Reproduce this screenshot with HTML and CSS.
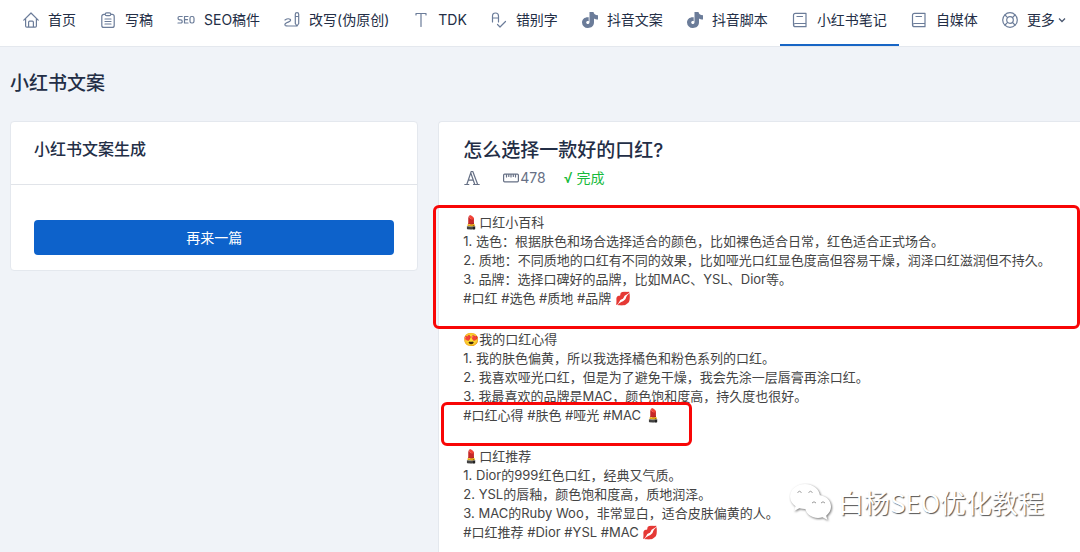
FILE: index.html
```html
<!DOCTYPE html>
<html lang="zh-CN">
<head>
<meta charset="utf-8">
<meta name="viewport" content="width=device-width, initial-scale=1">
<title>小红书文案</title>
<link rel="stylesheet" href="styles.css">
</head>
<body>
<header class="topbar">
  <nav class="nav" aria-label="主导航">
    <a class="nav-item" href="#home"><svg class="icon" viewBox="0 0 16 16"><path d="M.8 8.200 8 1l7.200 7.200M2.600 6.800V14a1.200 1.200 0 0 0 1.200 1.200h8.400a1.200 1.200 0 0 0 1.200-1.200V6.800M5.600 15V10.200a1 1 0 0 1 1-1h2.800a1 1 0 0 1 1 1V15"/></svg>首页</a>
    <a class="nav-item" href="#write"><svg class="icon" viewBox="0 0 16 16"><path d="M5.200 2.400H3.800a2 2 0 0 0-2 2v9a2 2 0 0 0 2 2h8.400a2 2 0 0 0 2-2v-9a2 2 0 0 0-2-2h-1.400M5.200 2.200q0-1.400 1.400-1.400h2.800q1.400 0 1.400 1.400t-1.400 1.500H6.600q-1.400 0-1.400-1.500zM5 7h6M5 9.500h6M5 12h6"/></svg>写稿</a>
    <a class="nav-item" href="#seo"><svg class="icon icon-wide" viewBox="0 0 18 16"><path d="M5.200 4.500H2.400Q1 4.500 1 6.100t1.400 1.700h1.400q1.400 0 1.400 1.600T3.800 11H1M11 4.500H7.500V11H11M7.500 7.700h3M14.600 4.500h.8Q17 4.500 17 6.200v3.100Q17 11 15.400 11h-.8Q13 11 13 9.300V6.200q0-1.700 1.600-1.700z"/></svg>SEO稿件</a>
    <a class="nav-item" href="#rewrite"><svg class="icon" viewBox="0 0 16 16"><path d="M11.300 2.300a1.700 1.700 0 0 1 3.400 0v9.200L13 14l-1.700-2.500zM11.300 4.500h3.400M1 8q3-2 5-.8c1.500 1-.2 2.300-1.800 2.900-2 .7-4 1.800-3 3.200.6.800 2 .7 3.300.7H13"/></svg>改写(伪原创)</a>
    <a class="nav-item" href="#tdk"><svg class="icon" viewBox="0 0 16 16"><path d="M3 3V1.500h10V3M8 1.500v13"/></svg>TDK</a>
    <a class="nav-item" href="#typo"><svg class="icon" viewBox="0 0 16 16"><path d="M1.500 10V4q0-3 3-3t3 3v6M1.500 6h6M6.500 12.500l2.500 2.500L14.500 9.500"/></svg>错别字</a>
    <a class="nav-item" href="#douyin"><svg class="icon icon-solid" viewBox="0 0 16 16"><path d="M7.500 0h4c.2 1.900 1.500 3 4.500 3.300v4.200c-1.600 0-3-.4-4-1.100v3.900C12 14 9.300 16 6 16a5.800 5.800 0 0 1-6-5.600C0 7 3 4.700 6.700 5.200v4c-1.500-.3-2.500.3-2.500 1.300 0 .9.700 1.500 1.600 1.500 1 0 1.700-.6 1.700-1.800z"/></svg>抖音文案</a>
    <a class="nav-item" href="#script"><svg class="icon icon-solid" viewBox="0 0 16 16"><path d="M7.500 0h4c.2 1.900 1.500 3 4.500 3.300v4.200c-1.600 0-3-.4-4-1.100v3.900C12 14 9.300 16 6 16a5.800 5.800 0 0 1-6-5.600C0 7 3 4.700 6.700 5.200v4c-1.500-.3-2.500.3-2.500 1.300 0 .9.700 1.500 1.600 1.500 1 0 1.700-.6 1.700-1.800z"/></svg>抖音脚本</a>
    <a class="nav-item active" href="#notes" aria-current="page"><svg class="icon" viewBox="0 0 16 16"><path d="M14 11.500V1.300H3.500q-2 0-2 2v9.400q0 2 2 2H14v-3.200H3.500q-2 0-2 1.600M5 4.500h5.500"/></svg>小红书笔记</a>
    <a class="nav-item" href="#media"><svg class="icon" viewBox="0 0 16 16"><path d="M14 11.500V1.300H3.500q-2 0-2 2v9.400q0 2 2 2H14v-3.200H3.500q-2 0-2 1.600M5 4.500h5.500"/></svg>自媒体</a>
    <a class="nav-item" href="#more"><svg class="icon" viewBox="0 0 16 16"><circle cx="8" cy="8" r="7.300"/><circle cx="8" cy="8" r="3.300"/><path d="m3 3 2.600 2.600M13 3l-2.600 2.600M3 13l2.600-2.600M13 13l-2.600-2.600"/></svg><span class="more">更多<svg class="chevron" viewBox="0 0 8 8"><path d="m1 2.500 3 3 3-3"/></svg></span></a>
  </nav>
</header>

<main class="page">
  <h1 class="page-title">小红书文案</h1>
  <div class="columns">
    <section class="card">
      <h2 class="card-title">小红书文案生成</h2>
      <div class="card-body">
        <button class="primary" type="button">再来一篇</button>
      </div>
    </section>

    <article class="card result">
      <h2 class="result-title">怎么选择一款好的口红?</h2>
      <div class="meta">
        <svg class="icon font-icon" viewBox="0 0 16 16"><path d="M.8 14.500h4M2.800 14.500 7.200 1.500h1.600l4.900 13M6.800 3l4 11.500M4.400 10.200h4.800M9.500 14.500h5.700"/></svg>
        <span class="count"><svg class="icon" viewBox="0 0 16 16"><rect x=".6" y="4.200" width="14.800" height="7.600" rx="1"/><path d="M3.500 4.500V7M5.800 4.500V6.500M8 4.500V7M10.300 4.500V6.500M12.500 4.500V7"/></svg>478</span>
        <span class="done">√ 完成</span>
      </div>
      <div class="notes">
        <p class="note">💄口红小百科<br>1. 选色：根据肤色和场合选择适合的颜色，比如裸色适合日常，红色适合正式场合。<br>2. 质地：不同质地的口红有不同的效果，比如哑光口红显色度高但容易干燥，润泽口红滋润但不持久。<br>3. 品牌：选择口碑好的品牌，比如MAC、YSL、Dior等。<br>#口红 #选色 #质地 #品牌 💋</p>
        <p class="note">😍我的口红心得<br>1. 我的肤色偏黄，所以我选择橘色和粉色系列的口红。<br>2. 我喜欢哑光口红，但是为了避免干燥，我会先涂一层唇膏再涂口红。<br>3. 我最喜欢的品牌是MAC，颜色饱和度高，持久度也很好。<br>#口红心得 #肤色 #哑光 #MAC 💄</p>
        <p class="note">💄口红推荐<br>1. Dior的999红色口红，经典又气质。<br>2. YSL的唇釉，颜色饱和度高，质地润泽。<br>3. MAC的Ruby Woo，非常显白，适合皮肤偏黄的人。<br>#口红推荐 #Dior #YSL #MAC 💋</p>
        <div class="mark mark-intro"></div>
        <div class="mark mark-tags"></div>
      </div>
    </article>
  </div>
</main>

<div class="watermark">
  <svg class="wechat" viewBox="0 0 42 38"><path d="M16 1C7.500 1 1 6.600 1 13.500c0 4 2.100 7.400 5.500 9.700L5 28l5.300-2.800c1.800.5 3.700.8 5.700.8 8.500 0 15-5.600 15-12.500S24.500 1 16 1z"/><path d="M29 12c-7.200 0-13 5-13 11.500S21.800 35 29 35c1.600 0 3.100-.3 4.500-.7L38.500 37l-1.300-4.300C40 30.500 42 27.300 42 23.500 42 17 36.200 12 29 12z"/><path class="eyes" d="M8.500 9.500q2-2.500 4 0M19.500 9.500q2-2.500 4 0M23 20q2-2.500 4 0M32 20q2-2.500 4 0"/></svg>
  <span>白杨SEO优化教程</span>
</div>
</body>
</html>
```
FILE: styles.css
```css
* { box-sizing: border-box; }

body {
  position: relative;
  margin: 0;
  background: #f0f3f8;
  color: #232e46;
  font: 14px/20px Inter, "Noto Sans CJK SC", sans-serif;
  overflow-x: hidden;
}

h1, h2, p { margin: 0; }

.topbar {
  background: #fff;
  border-bottom: 1px solid #e4e8ee;
}

.nav {
  display: flex;
  justify-content: space-between;
  padding: 0 2px 0 11px;
}

.nav-item {
  display: flex;
  align-items: center;
  gap: 9px;
  padding: 10px 12px 14px;
  border-bottom: 2px solid transparent;
  color: inherit;
  text-decoration: none;
  white-space: nowrap;
}

.nav-item.active { border-bottom-color: #1765c5; }

.icon {
  flex: none;
  width: 16px;
  height: 16px;
  fill: none;
  stroke: #6b7c99;
  stroke-width: 1.2;
  stroke-linecap: round;
  stroke-linejoin: round;
}

.icon-wide { width: 18px; }

.icon-solid {
  fill: #6b7c99;
  stroke: none;
}

.more {
  display: flex;
  align-items: center;
  gap: 3px;
}

.chevron {
  width: 8px;
  height: 8px;
  fill: none;
  stroke: #4b5870;
  stroke-width: 1.3;
}

.page { padding: 23px 0 0 10px; }

.page-title {
  font-size: 19px;
  line-height: 28px;
  font-weight: 500;
}

.columns {
  display: grid;
  grid-template-columns: 7fr 11fr;
  align-items: start;
  gap: 20px;
  margin-top: 23px;
}

.card {
  min-width: 0;
  background: #fff;
  border: 1px solid #e4e8ee;
  border-radius: 4px;
}

.card-title {
  padding: 15px 23px 23px;
  border-bottom: 1px solid #e1e4e9;
  font-size: 16px;
  line-height: 24px;
  font-weight: 500;
}

.card-body { padding: 35px 23px 15px; }

.primary {
  display: block;
  width: 100%;
  padding: 8px;
  border: 0;
  border-radius: 4px;
  background: #0d62cb;
  color: #fff;
  font: inherit;
  line-height: 19px;
}

.result {
  padding: 15px 0 24px 24px;
  border-right: 0;
  border-radius: 4px 0 0 0;
}

.result-title {
  font-size: 19px;
  line-height: 28px;
  font-weight: 500;
}

.meta {
  display: flex;
  align-items: center;
  margin-top: 3px;
  color: #667085;
}

.meta .icon { stroke: #667085; }

.font-icon { margin: 0 23px 0 1px; }

.count {
  display: flex;
  align-items: center;
  gap: 1px;
}

.done {
  margin-left: 18px;
  color: #18bb3c;
}

.notes {
  position: relative;
  display: grid;
  gap: 22px;
  margin-top: 25px;
  color: #444;
}

.note {
  font-size: 13px;
  line-height: 19px;
}

.mark {
  position: absolute;
  border: 3px solid #f80606;
  border-radius: 6px;
}

.mark-intro {
  top: -8px;
  left: -30px;
  right: 0;
  height: 124px;
}

.mark-tags {
  top: 189px;
  left: -22px;
  width: 251px;
  height: 44px;
}

.watermark {
  position: absolute;
  top: 482px;
  right: 36px;
  display: flex;
  align-items: center;
  gap: 7px;
  color: #fff;
  font: 26px/40px "Noto Sans CJK SC", sans-serif;
  text-shadow: 1px 1px 1px #555;
}

.wechat {
  width: 42px;
  height: 38px;
  fill: #fff;
  overflow: visible;
  filter: drop-shadow(1px 1px 1px #777);
}

.eyes {
  fill: none;
  stroke: #999;
  stroke-width: 1;
}
```
